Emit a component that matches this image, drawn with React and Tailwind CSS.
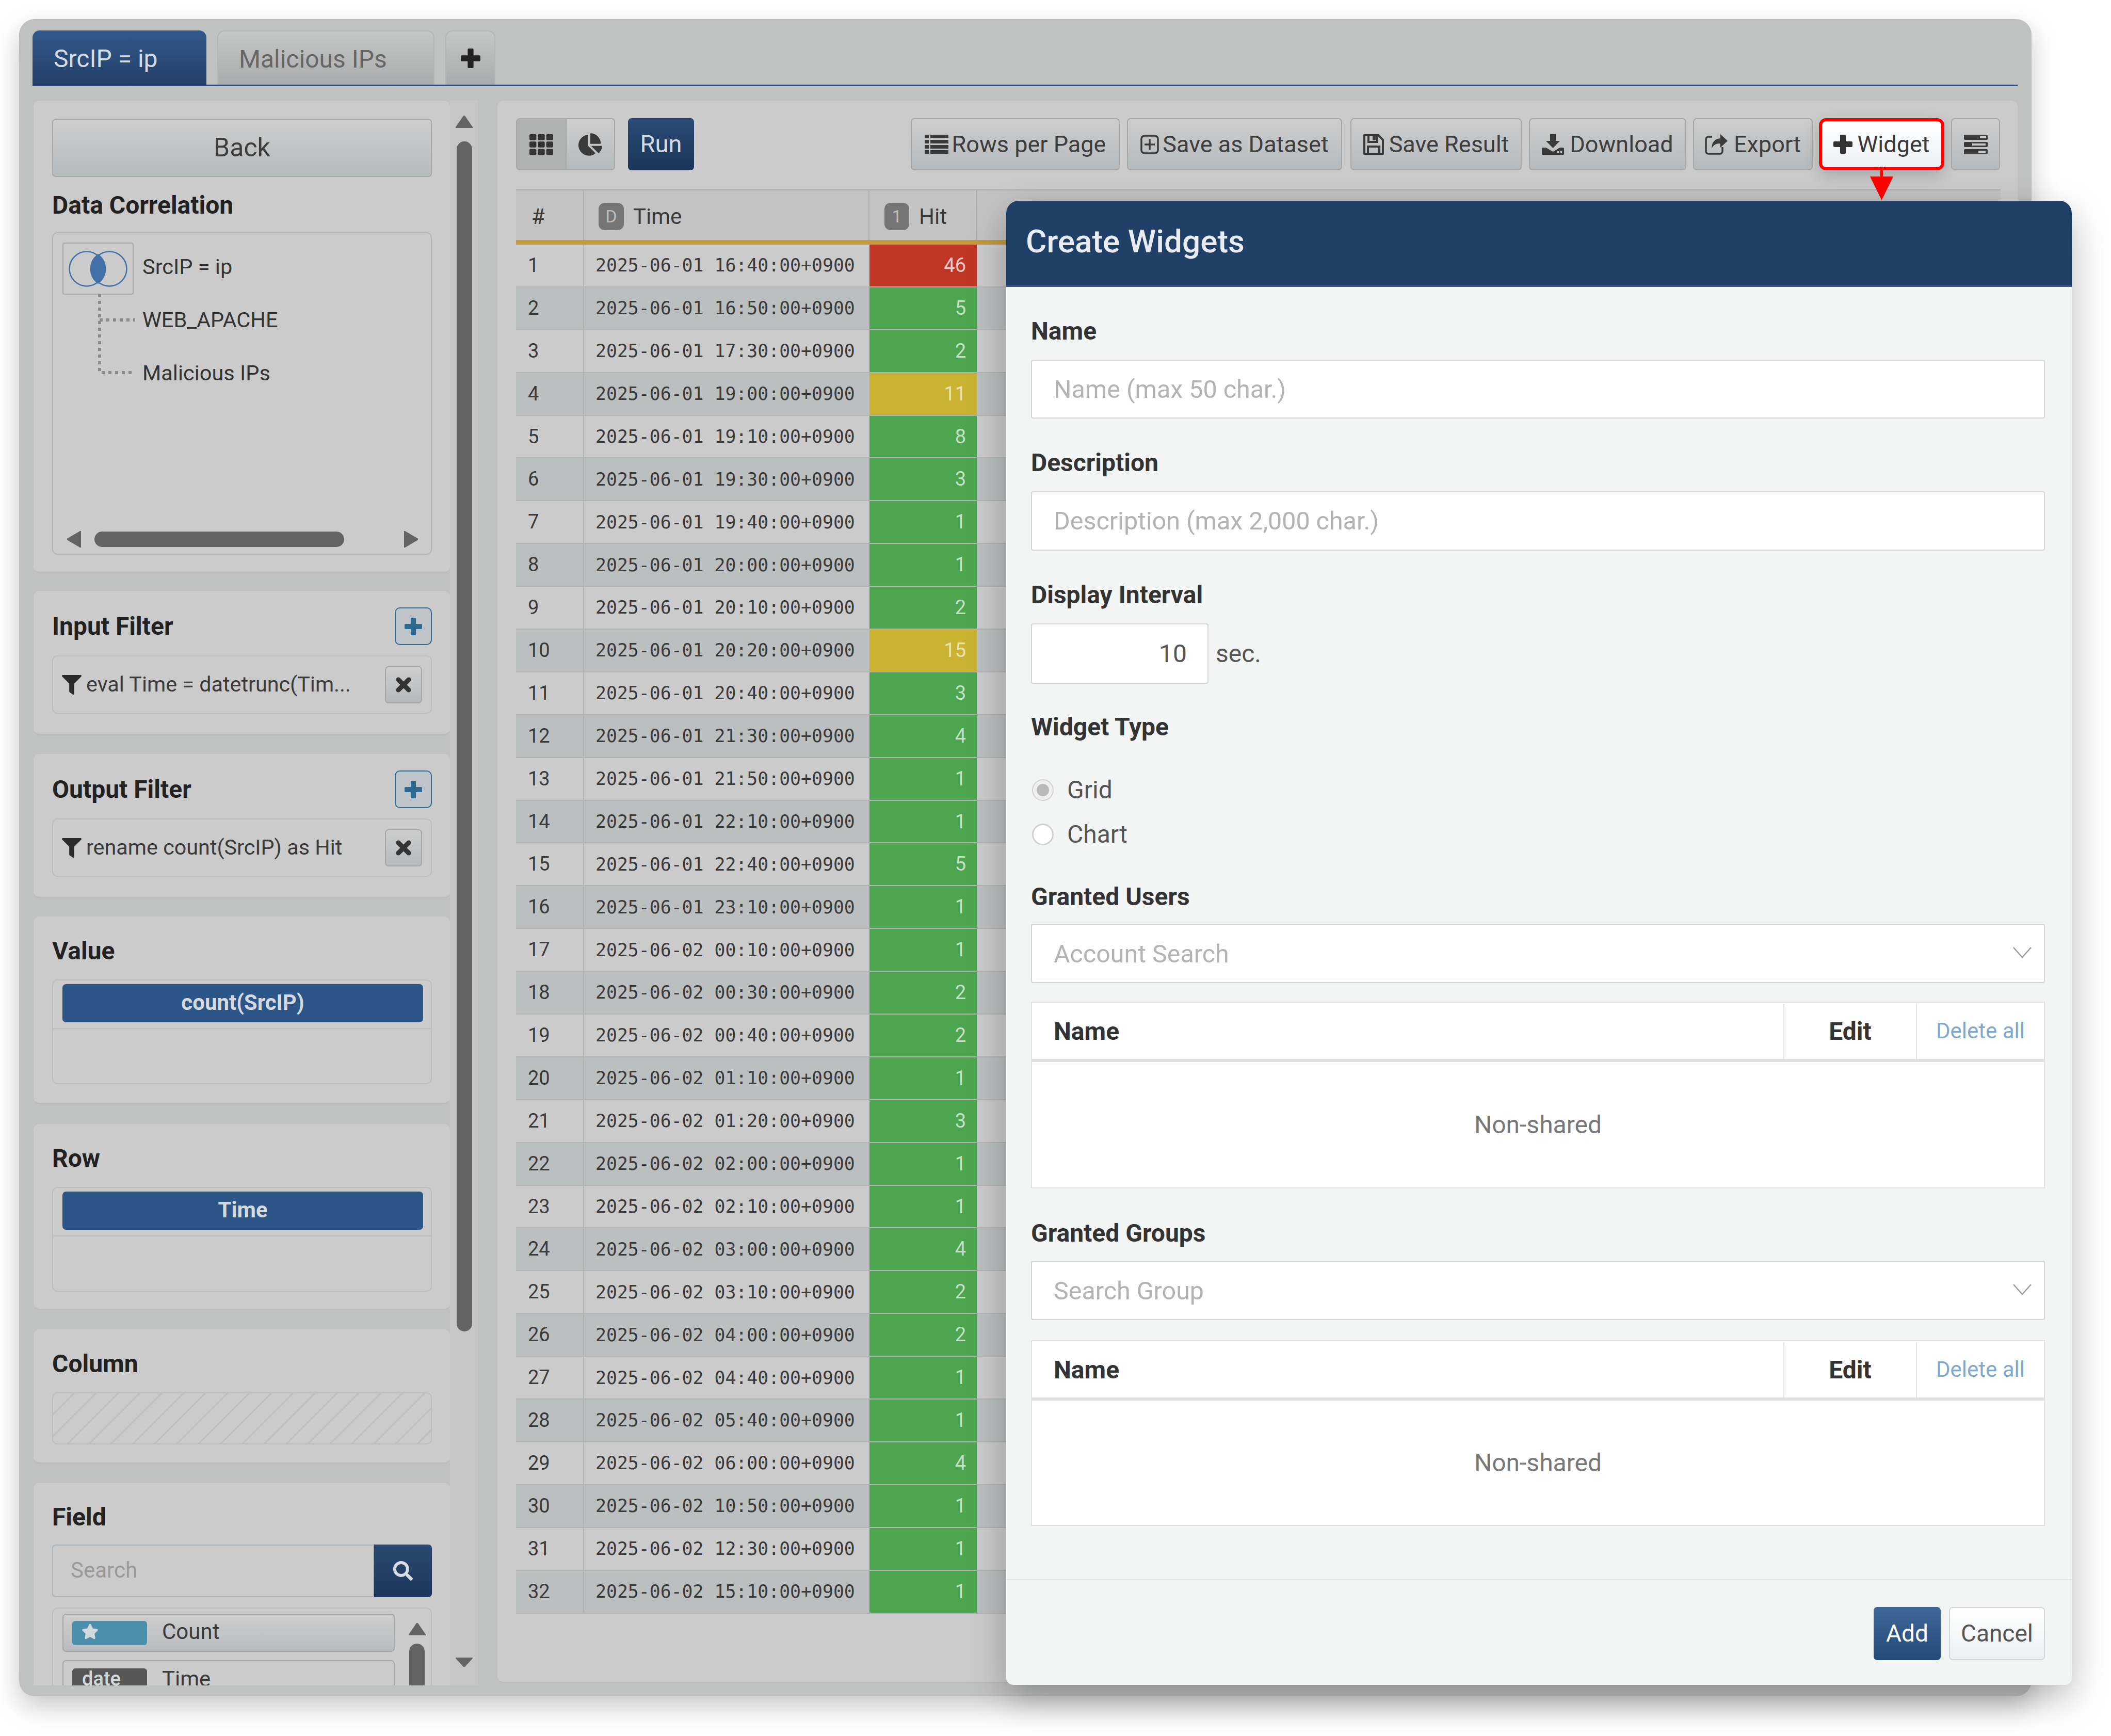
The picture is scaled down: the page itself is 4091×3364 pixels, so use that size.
import { FaTh, FaChartPie, FaFilter, FaSearch, FaStar } from 'react-icons/fa'

const rows = [
  ['2025-06-01 16:40:00+0900', 46], ['2025-06-01 16:50:00+0900', 5], ['2025-06-01 17:30:00+0900', 2], ['2025-06-01 19:00:00+0900', 11],
  ['2025-06-01 19:10:00+0900', 8], ['2025-06-01 19:30:00+0900', 3], ['2025-06-01 19:40:00+0900', 1], ['2025-06-01 20:00:00+0900', 1],
  ['2025-06-01 20:10:00+0900', 2], ['2025-06-01 20:20:00+0900', 15], ['2025-06-01 20:40:00+0900', 3], ['2025-06-01 21:30:00+0900', 4],
  ['2025-06-01 21:50:00+0900', 1], ['2025-06-01 22:10:00+0900', 1], ['2025-06-01 22:40:00+0900', 5], ['2025-06-01 23:10:00+0900', 1],
  ['2025-06-02 00:10:00+0900', 1], ['2025-06-02 00:30:00+0900', 2], ['2025-06-02 00:40:00+0900', 2], ['2025-06-02 01:10:00+0900', 1],
  ['2025-06-02 01:20:00+0900', 3], ['2025-06-02 02:00:00+0900', 1], ['2025-06-02 02:10:00+0900', 1], ['2025-06-02 03:00:00+0900', 4],
  ['2025-06-02 03:10:00+0900', 2], ['2025-06-02 04:00:00+0900', 2], ['2025-06-02 04:40:00+0900', 1], ['2025-06-02 05:40:00+0900', 1],
  ['2025-06-02 06:00:00+0900', 4], ['2025-06-02 10:50:00+0900', 1], ['2025-06-02 12:30:00+0900', 1], ['2025-06-02 15:10:00+0900', 1],
]

const hitColor = (n) => {
  if (n > 20) return 'bg-[#c03625] text-[#e6c9c3]'
  if (n > 10) return 'bg-[#c9b331] text-[#e9e2b8]'
  return 'bg-[#4ca64f] text-[#c4e0c5]'
}

const grayBtn = 'flex items-center justify-center rounded-[7px] border-[2px] border-[#a6a8a8] bg-gradient-to-b from-[#cdcdcd] to-[#b6babd] text-[#3d3d3d]'

const ListIcon = () => (
  <svg width="46" height="37" viewBox="0 0 46 37" fill="#3a3a3a" className="mr-[7px]">
    <rect x="0" y="0" width="8" height="7" /><rect x="11" y="0" width="35" height="7" />
    <rect x="0" y="10" width="8" height="7" /><rect x="11" y="10" width="35" height="7" />
    <rect x="0" y="20" width="8" height="7" /><rect x="11" y="20" width="35" height="7" />
    <rect x="0" y="30" width="8" height="7" /><rect x="11" y="30" width="35" height="7" />
  </svg>
)

const PlusSquareIcon = () => (
  <svg width="36" height="38" viewBox="0 0 36 38" fill="none" stroke="#3a3a3a" strokeWidth="3.5" className="mr-[7px]">
    <rect x="2" y="2" width="32" height="34" rx="6" />
    <path d="M18 9v20M8 19h20" />
  </svg>
)

const FloppyIcon = () => (
  <svg width="40" height="40" viewBox="0 0 40 40" fill="none" stroke="#3a3a3a" strokeWidth="4" className="mr-[10px]">
    <path d="M2 2h27l9 9v27H2z" strokeLinejoin="round" />
    <path d="M10 2v13h17V2" />
    <rect x="18" y="3" width="6" height="9" fill="#3a3a3a" stroke="none" />
    <path d="M9 38V24h22v14" />
  </svg>
)

const DownloadIcon = () => (
  <svg width="43" height="40" viewBox="0 0 43 40" fill="#3a3a3a" className="mr-[11px]">
    <path d="M16 0h11v13h8L21.500 27 8 13h8z" />
    <path d="M2 26h6l13.500 8L35 26h6a2 2 0 0 1 2 2v10a2 2 0 0 1-2 2H2a2 2 0 0 1-2-2V28a2 2 0 0 1 2-2z" />
    <rect x="30" y="33" width="3" height="3" fill="#c4c6c7" /><rect x="36" y="33" width="3" height="3" fill="#c4c6c7" />
  </svg>
)

const ShareIcon = () => (
  <svg width="44" height="40" viewBox="0 0 44 40" className="mr-[12px]">
    <path d="M14 5H7a5 5 0 0 0-5 5v23a5 5 0 0 0 5 5h22a5 5 0 0 0 5-5v-8" fill="none" stroke="#3a3a3a" strokeWidth="3.5" />
    <path d="M30 0l14 13-14 13v-8c-9 0-14 3-17 10 0-12 6-19 17-20z" fill="#3a3a3a" />
  </svg>
)

const PlusIcon = ({ size = 37, color = '#333' }) => (
  <svg width={size} height={size} viewBox="0 0 37 37" fill={color}>
    <path d="M13 2a2 2 0 0 1 2-2h7a2 2 0 0 1 2 2v11h11a2 2 0 0 1 2 2v7a2 2 0 0 1-2 2H24v11a2 2 0 0 1-2 2h-7a2 2 0 0 1-2-2V24H2a2 2 0 0 1-2-2v-7a2 2 0 0 1 2-2h11z" />
  </svg>
)

const CrossIcon = () => (
  <svg width="30" height="30" viewBox="0 0 30 30" fill="none" stroke="#333" strokeWidth="9" strokeLinecap="round">
    <path d="M5 5l20 20M25 5L5 25" />
  </svg>
)

const StackIcon = () => (
  <svg width="46" height="38" viewBox="0 0 46 38" fill="#3a3a3a">
    <rect width="46" height="10" rx="2" /><rect y="14" width="46" height="10" rx="2" /><rect y="28" width="46" height="10" rx="2" />
    <rect x="31" y="3" width="12" height="4" fill="#c8c9c9" />
    <rect x="16" y="17" width="26" height="4" fill="#c8c9c9" />
    <rect x="28" y="31" width="14" height="4" fill="#c8c9c9" />
  </svg>
)

const Tri = ({ dir, color = '#636363', w = 33, h = 24 }) => {
  const pts = {
    up: `0,${h} ${w},${h} ${w / 2},0`,
    down: `0,0 ${w},0 ${w / 2},${h}`,
    left: `${w},0 ${w},${h} 0,${h / 2}`,
    right: `0,0 0,${h} ${w},${h / 2}`,
  }[dir]
  return <svg width={w} height={h} viewBox={`0 0 ${w} ${h}`}><polygon points={pts} fill={color} strokeLinejoin="round" stroke={color} strokeWidth="2" /></svg>
}

const panel = 'rounded-[12px] bg-[#cbcbcb] border-b-[3px] border-[#bcbcbc] pl-[36px] pr-[35px]'
const heading = 'flex items-center h-[60px] text-[48px] font-bold text-[#222] leading-none'
const label = 'flex items-center h-[60px] text-[48px] font-bold text-[#333]'
const field = 'flex items-center pl-[42px] pt-[2px] border-[2px] border-[#d4d6d6] rounded-[4px] bg-white text-[48.400px] text-[#b3b3b3]'

const FilterPanel = ({ title, text, mt }) => (
  <div className={`${panel} ${mt} h-[280px] pt-[32px]`}>
    <div className="flex items-center justify-between h-[73px]">
      <div className={heading}>{title}</div>
      <button className="flex items-center justify-center w-[72px] h-[73px] rounded-[10px] border-[2px] border-[#2f6d96] bg-[#bec4c9]">
        <PlusIcon size={34} color="#2c6a92" />
      </button>
    </div>
    <div className="flex items-center mt-[20px] h-[113px] rounded-[10px] border-[2px] border-[#bdbdbd] pl-[17px] pr-[17px]">
      <FaFilter className="w-[38px] h-[38px] text-[#2a2a2a]" />
      <span className="ml-[9px] flex-1 text-[41.300px] text-[#3a3a3a] whitespace-nowrap">{text}</span>
      <div className={`${grayBtn} w-[72px] h-[72px]`}>
        <CrossIcon />
      </div>
    </div>
  </div>
)

const PillPanel = ({ title, pill, mt, h }) => (
  <div className={`${panel} ${mt} ${h} pt-[37px]`}>
    <div className={heading}>{title}</div>
    <div className="mt-[25px] h-[203px] rounded-[10px] border-[2px] border-[#bdbdbd]">
      <div className="flex items-start justify-center h-[94px] pl-[18px] pr-[15px] pt-[7px] border-b-[2px] border-[#bdbdbd]">
        <div className="flex items-center justify-center w-full h-[74px] pb-[4px] rounded-[7px] bg-[#2b5687] text-[#d5d9de] text-[42px] font-bold">{pill}</div>
      </div>
    </div>
  </div>
)

const Grants = ({ title, placeholder, mt, selectMt, tableMt, tableH, bodyH }) => (
  <>
    <div className={`${label} ${mt}`}>{title}</div>
    <div className={`${selectMt} flex items-center justify-between h-[115px] pt-[3px] border-[2px] border-[#d4d6d6] rounded-[4px] bg-white pl-[42px] pr-[24px] text-[48.400px] text-[#b3b3b3]`}>
      <span>{placeholder}</span>
      <svg width="36" height="22" viewBox="0 0 36 22" fill="none" stroke="#9a9a9a" strokeWidth="2.500" className="mb-[6px]"><path d="M1 1l17 19L35 1" /></svg>
    </div>
    <div className={`${tableMt} ${tableH} border-[2px] border-[#dfe1e1] bg-white`}>
      <div className="flex h-[115px] pt-[2px] border-b-[6px] border-[#dfe1e1] text-[48px] font-bold text-[#333]">
        <div className="flex items-center flex-1 pl-[42px]">Name</div>
        <div className="flex items-center justify-center w-[257px] border-l-[2px] border-[#e3e5e5]">Edit</div>
        <div className="flex items-center justify-center w-[248px] pb-[2px] border-l-[2px] border-[#e3e5e5] text-[42px] font-normal text-[#7fa7d0]">Delete all</div>
      </div>
      <div className={`flex items-center justify-center ${bodyH} pt-[3px] text-[48px] text-[#777]`}>Non-shared</div>
    </div>
  </>
)

export default function App() {
  return (
    <div className="relative w-[4091px] h-[3364px] overflow-hidden bg-white pt-[37px] pl-[37px] font-[family-name:Roboto]">
      {/* dimmed page behind the dialog */}
      <div className="w-[3900px] h-[3250px] rounded-[30px] bg-[#c0c2c1] pt-[22px] pl-[26px] shadow-[0_20px_50px_rgba(0,0,0,0.22)]">
        <div className="flex gap-[21px] w-[3847px] h-[108px] border-b-[3px] border-[#2b4a72] text-[48px]">
          <div className="flex items-center w-[337px] pl-[41px] pt-[5px] rounded-t-[14px] bg-gradient-to-b from-[#32598b] to-[#234069] text-[#d6dbe1]">SrcIP = ip</div>
          <div className="flex items-center w-[421px] pl-[40px] pt-[5px] rounded-t-[14px] border-[2px] border-b-0 border-[#b4b6b6] bg-gradient-to-b from-[#c6c7c7] to-[#a9abac] text-[#666]">Malicious IPs</div>
          <div className="flex items-center justify-center w-[97px] rounded-t-[14px] border-[2px] border-b-0 border-[#b4b6b6] bg-gradient-to-b from-[#c6c7c7] to-[#a9abac]">
            <PlusIcon size={38} color="#222" />
          </div>
        </div>

        <div className="flex mt-[28px] h-[3071px]">
          {/* left column */}
          <div className="w-[807px] ml-[2px] overflow-hidden shrink-0">
            <div className={`${panel} h-[916px] pt-[35px]`}>
              <div className={`${grayBtn} h-[113px] text-[50px]`}>Back</div>
              <div className="flex items-center h-[60px] mt-[25px] text-[48px] font-bold text-[#222]">Data Correlation</div>
              <div className="relative flex flex-col mt-[22px] h-[625px] rounded-[10px] border-[2px] border-[#b5b5b5] pl-[18px] pt-[18px] text-[41.500px] text-[#333]">
                <svg width="72" height="155" viewBox="0 0 72 155" fill="none" stroke="#8a8a8a" strokeWidth="6" strokeDasharray="6 7" className="absolute left-[87px] top-[118px]">
                  <path d="M3 0v152h69M3 50h69" />
                </svg>
                <div className="flex items-center h-[101px]">
                  <div className="flex items-center justify-center w-[138px] h-[101px] border-[2px] border-[#a9a9a9] rounded-[4px]">
                    <svg width="114" height="70" viewBox="0 0 114 70" fill="none" stroke="#4270a8" strokeWidth="2.500">
                      <path d="M57 7.500a34 34 0 0 1 0 55a34 34 0 0 1 0-55z" fill="#4270a8" />
                      <circle cx="35" cy="35" r="33.500" />
                      <circle cx="79" cy="35" r="33.500" />
                    </svg>
                  </div>
                  <span className="ml-[17px] pb-[6px]">SrcIP = ip</span>
                </div>
                <div className="flex items-center h-[103px] pl-[155px] pb-[4px]">WEB_APACHE</div>
                <div className="flex items-center h-[103px] pl-[155px] pb-[4px]">Malicious IPs</div>
                <div className="flex items-center mt-auto mb-[12px] ml-[9px] h-[32px]">
                  <Tri dir="left" w={27} h={32} />
                  <div className="ml-[26px] w-[484px] h-[30px] rounded-full bg-[#636363]" />
                  <div className="ml-[116px]"><Tri dir="right" w={27} h={32} /></div>
                </div>
              </div>
            </div>

            <FilterPanel title="Input Filter" text="eval Time = datetrunc(Tim..." mt="mt-[34px]" />
            <FilterPanel title="Output Filter" text="rename count(SrcIP) as Hit" mt="mt-[36px]" />
            <PillPanel title="Value" pill="count(SrcIP)" mt="mt-[35px]" h="h-[364px]" />
            <PillPanel title="Row" pill="Time" mt="mt-[38px]" h="h-[361px]" />

            <div className={`${panel} mt-[37px] h-[261px] pt-[37px]`}>
              <div className={heading}>Column</div>
              <div className="mt-[25px] h-[101px] rounded-[10px] border-[2px] border-[#bdbdbd] bg-[repeating-linear-gradient(135deg,transparent,transparent_27px,#c0c0c0_27px,#c0c0c0_30px)]" />
            </div>

            <div className={`${panel} mt-[36px] h-[500px] pt-[37px]`}>
              <div className={heading}>Field</div>
              <div className="flex mt-[23px] h-[102px]">
                <div className="flex items-center flex-1 pl-[34px] pb-[4px] rounded-l-[7px] border-[2px] border-[#a9b4bc] text-[42px] text-[#9a9a9a]">Search</div>
                <div className="flex items-center justify-center w-[112px] rounded-r-[7px] bg-gradient-to-b from-[#2a4a73] to-[#1c365a]">
                  <FaSearch className="w-[38px] h-[38px] text-[#d8dde3]" />
                </div>
              </div>
              <div className="flex mt-[20px] h-[200px] rounded-t-[10px] border-[2px] border-b-0 border-[#bdbdbd] pl-[18px] pt-[10px]">
                <div className="w-[644px] text-[42px] text-[#3a3a3a]">
                  <div className="flex items-center h-[74px] pl-[17px] rounded-[7px] border-[2px] border-[#a6a8a8] bg-gradient-to-b from-[#cdcdcd] to-[#b9bcbf]">
                    <div className="flex items-start w-[145px] h-[47px] pl-[18px] pt-[4px] rounded-[6px] bg-[#4a90ad]">
                      <FaStar className="w-[33px] h-[33px] text-[#d3d8da]" />
                    </div>
                    <span className="ml-[29px] pb-[5px]">Count</span>
                  </div>
                  <div className="flex items-start h-[74px] mt-[16px] pl-[17px] pt-[14px] rounded-[7px] border-[2px] border-[#a6a8a8]">
                    <div className="flex items-center w-[145px] h-[47px] pl-[19px] pb-[6px] rounded-[6px] bg-[#565656] text-[#d3d8da] text-[38px] font-medium">date</div>
                    <span className="ml-[29px] leading-[42px]">Time</span>
                  </div>
                </div>
                <div className="flex flex-col items-center w-[54px] ml-[16px] pt-[18px]">
                  <Tri dir="up" />
                  <div className="mt-[16px] w-[30px] h-[100px] rounded-full bg-[#636363]" />
                </div>
              </div>
            </div>
          </div>

          {/* left column scrollbar */}
          <div className="flex flex-col items-center w-[55px] shrink-0 bg-[#c6c6c6] pt-[29px]">
            <Tri dir="up" />
            <div className="mt-[26px] w-[30px] h-[2306px] rounded-full bg-[#636363]" />
            <div className="mt-[632px]"><Tri dir="down" h={18} /></div>
          </div>

          {/* result panel */}
          <div className="w-[2946px] h-[3067px] ml-[37px] rounded-[12px] bg-[#cbcbcb] pt-[34px] pl-[36px] pr-[33px] border-b-[3px] border-[#bcbcbc]">
            <div className="flex h-[101px] text-[45px]">
              <div className="flex items-center justify-center w-[98px] rounded-l-[7px] border-[2px] border-[#a6a8a8] bg-[#b0b1b1]">
                <FaTh className="w-[46px] h-[46px] text-[#333]" />
              </div>
              <div className="flex items-center justify-center w-[94px] rounded-r-[7px] border-[2px] border-l-0 border-[#a6a8a8] bg-gradient-to-b from-[#cdcdcd] to-[#b6babd]">
                <FaChartPie className="w-[46px] h-[46px] text-[#3a3a3a]" />
              </div>
              <div className="flex items-center justify-center w-[128px] ml-[25px] rounded-[7px] bg-gradient-to-b from-[#2b4c78] to-[#1a3558] text-[47px] text-[#d5dae0]">Run</div>
              <div className={`${grayBtn} w-[405px] ml-[420px]`}><ListIcon />Rows per Page</div>
              <div className={`${grayBtn} w-[417px] ml-[14px]`}><PlusSquareIcon />Save as Dataset</div>
              <div className={`${grayBtn} w-[332px] ml-[16px]`}><FloppyIcon />Save Result</div>
              <div className={`${grayBtn} w-[305px] ml-[14px]`}><DownloadIcon />Download</div>
              <div className={`${grayBtn} w-[232px] ml-[13px]`}><ShareIcon />Export</div>
              <div className="flex items-center justify-center gap-[9px] w-[243px] ml-[12px] rounded-[14px] border-[6px] border-[#ff0000] bg-gradient-to-b from-white to-[#edf0f4] text-[#3a3a3a] shadow-[0_10px_30px_rgba(0,0,0,0.18)]">
                <PlusIcon />Widget
              </div>
              <div className={`${grayBtn} w-[95px] ml-[13px]`}><StackIcon /></div>
            </div>

            <div className="mt-[37px] border-t-[2px] border-[#adadad]">
              <div className="flex h-[96px] bg-[#c3c3c3] text-[42px] text-[#3a3a3a]">
                <div className="flex items-center w-[132px] pl-[30px] pt-[5px] border-r-[2px] border-[#adadad]">#</div>
                <div className="flex items-center w-[553px] pl-[28px] pt-[5px] border-r-[2px] border-[#adadad]">
                  <span className="flex items-center justify-center w-[49px] h-[53px] rounded-[12px] bg-[#757575] text-[#bdbdbd] text-[34px]">D</span>
                  <span className="ml-[18px]">Time</span>
                </div>
                <div className="flex items-center w-[208px] pl-[29px] pt-[5px] border-r-[2px] border-[#adadad]">
                  <span className="flex items-center justify-center w-[48px] h-[53px] rounded-[12px] bg-[#757575] text-[#bdbdbd] text-[34px]">1</span>
                  <span className="ml-[19px]">Hit</span>
                </div>
              </div>
              <div className="h-[9px] bg-[#c39a3c]" />
              {rows.map(([time, hit], i) => (
                <div key={i} className={`flex h-[82.9px] border-b-[2px] border-[#b3b3b3] text-[#3a3a3a] ${i % 2 ? 'bg-[#bbbfbf]' : 'bg-[#cbcbcb]'}`}>
                  <div className="flex items-center w-[132px] pl-[23px] border-r-[2px] border-[#b3b3b3] text-[38px]">{i + 1}</div>
                  <div className="flex items-center w-[553px] pl-[22px] font-[family-name:'DejaVu_Sans_Mono'] text-[34.800px]">{time}</div>
                  <div className={`flex items-center justify-end w-[208px] pr-[21px] text-[38px] ${hitColor(hit)}`}>{hit}</div>
                </div>
              ))}
            </div>
          </div>
        </div>
      </div>

      {/* arrow from the Widget button to the dialog */}
      <svg width="48" height="66" viewBox="0 0 48 66" className="absolute left-[3623px] top-[323px]">
        <rect x="21" y="0" width="5" height="22" fill="#ff0000" />
        <polygon points="1,19 46,19 23.500,65" fill="#ff0000" />
      </svg>

      {/* Create Widgets dialog */}
      <div className="absolute left-[1950px] top-[389px] flex flex-col w-[2065px] h-[2876px] rounded-t-[24px] rounded-b-[14px] bg-[#f3f5f4] shadow-[0_25px_70px_rgba(0,0,0,0.28)]">
        <div className="flex items-center h-[167px] pl-[38px] pb-[7px] rounded-t-[24px] bg-[#204068] text-[62px] font-medium text-[#e9edf2] border-b-[3px] border-[#3b5b85]">Create Widgets</div>
        <div className="flex-1 pl-[48px] pr-[52px]">
          <div className={`${label} mt-[56px]`}>Name</div>
          <div className={`${field} h-[114px] mt-[25px]`}>Name (max 50 char.)</div>
          <div className={`${label} mt-[56px]`}>Description</div>
          <div className={`${field} h-[115px] mt-[25px]`}>Description (max 2,000 char.)</div>
          <div className={`${label} mt-[56px]`}>Display Interval</div>
          <div className="flex items-center mt-[25px] text-[48px] text-[#555]">
            <div className="flex items-center justify-end w-[344px] h-[117px] pr-[40px] border-[2px] border-[#d4d6d6] rounded-[4px] bg-white">10</div>
            <span className="ml-[14px]">sec.</span>
          </div>
          <div className={`${label} mt-[54px]`}>Widget Type</div>
          <div className="flex items-center h-[60px] mt-[62px] ml-[2px] text-[48px] text-[#555]">
            <div className="flex items-center justify-center w-[42px] h-[42px] rounded-full border-[2px] border-[#cfd1d1] bg-[#f0f0f0]">
              <div className="w-[24px] h-[24px] rounded-full bg-[#b9b9b9]" />
            </div>
            <span className="ml-[26px]">Grid</span>
          </div>
          <div className="flex items-center h-[60px] mt-[26px] ml-[2px] text-[48px] text-[#555]">
            <div className="w-[42px] h-[42px] rounded-full border-[3px] border-[#cfd1d1] bg-white" />
            <span className="ml-[26px]">Chart</span>
          </div>
          <Grants title="Granted Users" placeholder="Account Search" mt="mt-[61px]" selectMt="mt-[22px]" tableMt="mt-[36px]" tableH="h-[362px]" bodyH="h-[241px]" />
          <Grants title="Granted Groups" placeholder="Search Group" mt="mt-[57px]" selectMt="mt-[23px]" tableMt="mt-[39px]" tableH="h-[360px]" bodyH="h-[239px]" />
        </div>
        <div className="flex justify-end gap-[16px] h-[205px] pt-[52px] pr-[52px] border-t-[2px] border-[#e4e6e6]">
          <div className="flex items-center justify-center w-[130px] h-[103px] rounded-[7px] bg-gradient-to-b from-[#3f6798] to-[#234a78] text-[46px] text-white">Add</div>
          <div className="flex items-center justify-center w-[186px] h-[103px] rounded-[7px] border-[2px] border-[#d4d6d6] bg-gradient-to-b from-white to-[#ecf0f3] text-[46px] text-[#555]">Cancel</div>
        </div>
      </div>
    </div>
  )
}
